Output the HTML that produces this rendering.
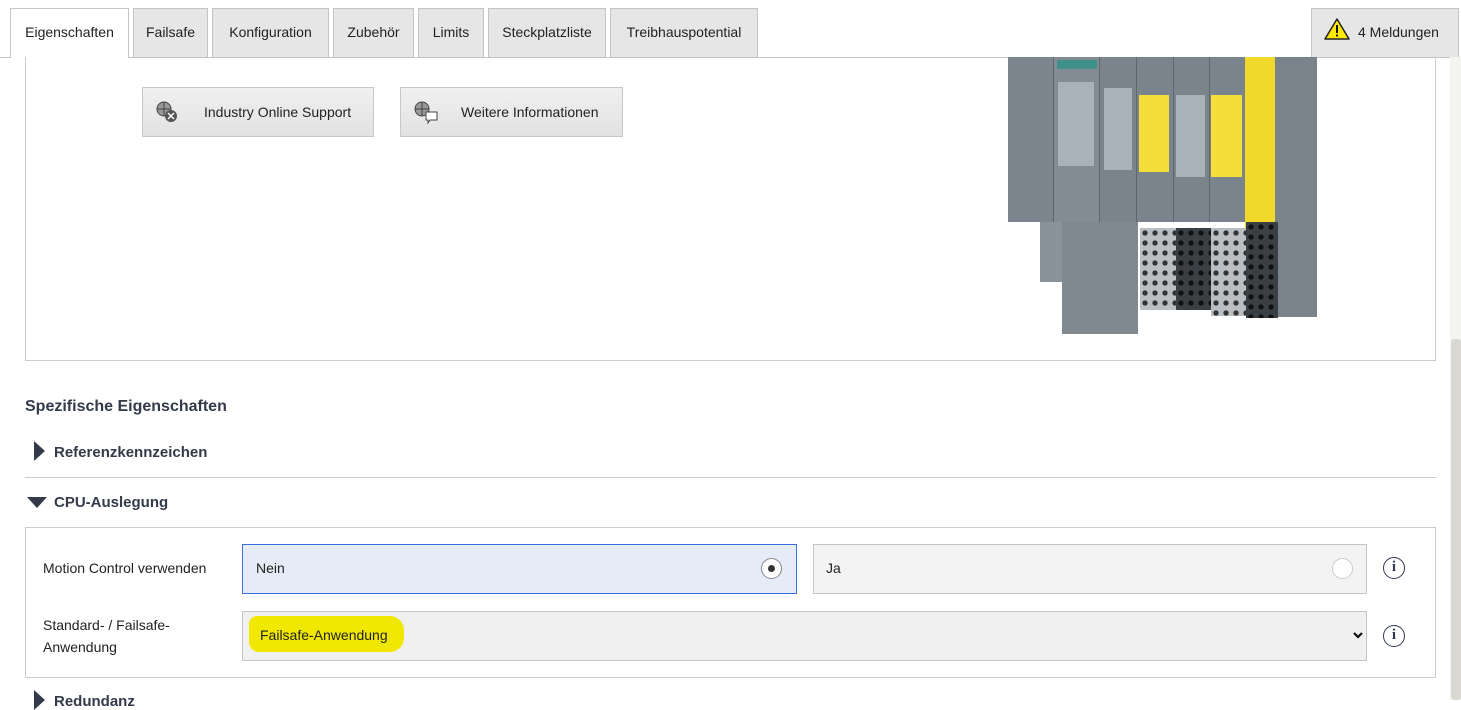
<!DOCTYPE html>
<html><head><meta charset="utf-8"><style>
*{box-sizing:border-box;margin:0;padding:0}
body{width:1461px;height:700px;overflow:hidden;background:#fff;font-family:"Liberation Sans",sans-serif;color:#222;position:relative;font-size:14px}
.a{position:absolute}
.tab{position:absolute;top:8px;height:49px;background:#e6e6e6;border:1px solid #c4c4c4;border-bottom:none;font-size:14px;line-height:47px;text-align:center;color:#222}
.btn{position:absolute;top:87px;height:50px;background:linear-gradient(#f0f0f0,#e2e2e2);border:1px solid #c8c8c8;font-size:14px;line-height:48px}
.info{position:absolute;width:22px;height:22px;border:1.5px solid #333a55;border-radius:50%;text-align:center;font:bold 15px/19px "Liberation Serif",serif;color:#333a55}
</style></head><body>
<div class="a" style="left:0;top:57px;width:1450px;height:1px;background:#c4c4c4"></div>
<div class="tab" style="left:10px;width:119px;background:#fff;height:50px;top:8px">Eigenschaften</div>
<div class="tab" style="left:133px;width:75px">Failsafe</div>
<div class="tab" style="left:212px;width:117px">Konfiguration</div>
<div class="tab" style="left:333px;width:81px">Zubehör</div>
<div class="tab" style="left:418px;width:66px">Limits</div>
<div class="tab" style="left:488px;width:118px">Steckplatzliste</div>
<div class="tab" style="left:610px;width:148px">Treibhauspotential</div>
<div class="tab" style="left:1311px;width:148px;text-align:left;padding-left:46px">4 Meldungen</div>
<svg class="a" style="left:1324px;top:18px" width="26" height="22"><path d="M13 1L25 21H1Z" fill="#ffea00" stroke="#222" stroke-width="1.5" stroke-linejoin="round"/><rect x="12" y="7" width="2" height="8" fill="#111"/><rect x="12" y="16.5" width="2" height="2" fill="#111"/></svg>
<div class="a" style="left:25px;top:57px;width:1411px;height:304px;border:1px solid #ccc;border-top:none"></div>
<div class="btn" style="left:142px;width:232px;padding-left:61px">Industry Online Support</div>
<div class="btn" style="left:400px;width:223px;padding-left:60px">Weitere Informationen</div>
<svg class="a" style="left:155px;top:100px" width="24" height="24"><circle cx="9" cy="9" r="7" fill="#999" stroke="#444"/><path d="M2 9h14M9 2v14" stroke="#444"/><circle cx="16" cy="16" r="6" fill="#555"/><path d="M13 13l6 6M19 13l-6 6" stroke="#fff" stroke-width="1.5"/></svg>
<svg class="a" style="left:413px;top:100px" width="26" height="26"><circle cx="9" cy="9" r="7" fill="#999" stroke="#444"/><path d="M2 9h14M9 2v14" stroke="#444"/><path d="M13 12h11v8h-7l-2 3v-3h-2z" fill="#fff" stroke="#444"/></svg>
<div class="a" style="left:1008px;top:57px;width:45px;height:165px;background:#7d868e"></div>
<div class="a" style="left:1053px;top:57px;width:46px;height:165px;background:#838c93;border-left:1px solid #5e666d"></div>
<div class="a" style="left:1058px;top:82px;width:36px;height:84px;background:#a8b2ba"></div>
<div class="a" style="left:1057px;top:60px;width:40px;height:9px;background:#3f8f8a"></div>
<div class="a" style="left:1099px;top:57px;width:37px;height:165px;background:#7b848c;border-left:1px solid #5e666d"></div>
<div class="a" style="left:1104px;top:88px;width:28px;height:82px;background:#a8b2ba"></div>
<div class="a" style="left:1136px;top:57px;width:37px;height:165px;background:#7b848c;border-left:1px solid #5e666d"></div>
<div class="a" style="left:1139px;top:95px;width:30px;height:77px;background:#f4df3a"></div>
<div class="a" style="left:1173px;top:57px;width:36px;height:165px;background:#7b848c;border-left:1px solid #5e666d"></div>
<div class="a" style="left:1176px;top:95px;width:29px;height:82px;background:#a8b2ba"></div>
<div class="a" style="left:1209px;top:57px;width:36px;height:165px;background:#7b848c;border-left:1px solid #5e666d"></div>
<div class="a" style="left:1211px;top:95px;width:31px;height:82px;background:#f4df3a"></div>
<div class="a" style="left:1245px;top:57px;width:30px;height:176px;background:#f1d92c"></div>
<div class="a" style="left:1275px;top:57px;width:42px;height:260px;background:#7a838b"></div>
<div class="a" style="left:1040px;top:222px;width:35px;height:60px;background:#8a939a"></div>
<div class="a" style="left:1062px;top:222px;width:76px;height:112px;background:#808990"></div>
<div class="a" style="left:1140px;top:228px;width:36px;height:82px;background:#b8bec2;background-image:radial-gradient(#333 35%,transparent 40%);background-size:10px 10px"></div>
<div class="a" style="left:1176px;top:228px;width:35px;height:82px;background:#3a3f44;background-image:radial-gradient(#111 35%,transparent 40%);background-size:10px 10px"></div>
<div class="a" style="left:1211px;top:228px;width:35px;height:88px;background:#b8bec2;background-image:radial-gradient(#333 35%,transparent 40%);background-size:10px 10px"></div>
<div class="a" style="left:1246px;top:222px;width:32px;height:96px;background:#3a3f44;background-image:radial-gradient(#111 35%,transparent 40%);background-size:10px 10px"></div>
<div class="a" style="left:1450px;top:57px;width:11px;height:643px;background:#f4f4f1"></div>
<div class="a" style="left:1451px;top:339px;width:10px;height:361px;background:#d9d8d2;border-radius:3px"></div>
<div class="a" style="left:25px;top:398px;font-size:16px;font-weight:bold;color:#333a4a">Spezifische Eigenschaften</div>
<svg class="a" style="left:34px;top:441px" width="12" height="20"><path d="M0 0L11 10L0 20Z" fill="#333a4a"/></svg>
<div class="a" style="left:54px;top:444px;font-size:15px;font-weight:bold;color:#333a4a">Referenzkennzeichen</div>
<div class="a" style="left:25px;top:477px;width:1411px;height:1px;background:#ccc"></div>
<svg class="a" style="left:27px;top:497px" width="20" height="12"><path d="M0 0H20L10 11Z" fill="#333a4a"/></svg>
<div class="a" style="left:54px;top:494px;font-size:15px;font-weight:bold;color:#333a4a">CPU-Auslegung</div>
<div class="a" style="left:25px;top:527px;width:1411px;height:151px;border:1px solid #ccc"></div>
<div class="a" style="left:43px;top:560px">Motion Control verwenden</div>
<div class="a" style="left:242px;top:544px;width:555px;height:50px;background:#e5ebf7;border:1px solid #3a6ed8;padding:15px 13px">Nein</div>
<div class="a" style="left:761px;top:558px;width:21px;height:21px;border:1px solid #888;border-radius:50%;background:#fff"><div style="width:7px;height:7px;border-radius:50%;background:#333;margin:6px"></div></div>
<div class="a" style="left:813px;top:544px;width:554px;height:50px;background:#f3f3f3;border:1px solid #c4c4c4;padding:15px 12px">Ja</div>
<div class="a" style="left:1332px;top:558px;width:21px;height:21px;border:1px solid #ccc;border-radius:50%;background:#fff"></div>
<div class="info" style="left:1383px;top:557px">i</div>
<div class="a" style="left:43px;top:614px;line-height:22px">Standard- / Failsafe-<br>Anwendung</div>
<div class="a" style="left:242px;top:611px;width:1125px;height:50px;background:#f0f0f0;border:1px solid #c4c4c4"></div>
<div class="a" style="left:249px;top:616px;width:155px;height:36px;background:#f0e800;border-radius:8px 14px 14px 10px"></div>
<div class="a" style="left:260px;top:627px">Failsafe-Anwendung</div>
<svg class="a" style="left:1353px;top:632px" width="10" height="8"><path d="M1 1L5 5L9 1" stroke="#111" stroke-width="2.2" fill="none"/></svg>
<div class="info" style="left:1383px;top:625px">i</div>
<svg class="a" style="left:34px;top:690px" width="12" height="20"><path d="M0 0L11 10L0 20Z" fill="#333a4a"/></svg>
<div class="a" style="left:54px;top:693px;font-size:15px;font-weight:bold;color:#333a4a">Redundanz</div>
</body></html>
